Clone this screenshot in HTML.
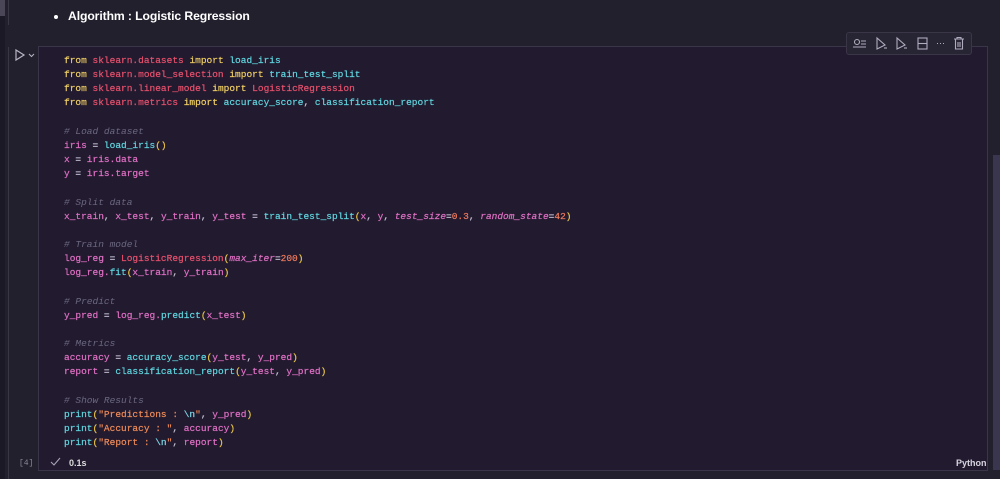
<!DOCTYPE html>
<html><head><meta charset="utf-8"><style>
html,body{margin:0;padding:0;width:1000px;height:479px;overflow:hidden;background:#23202d;font-family:"Liberation Sans",sans-serif;position:relative}
.ls{position:absolute;left:0;top:0;width:5px;height:479px;background:#1c1926}
.ls i{position:absolute;left:0;top:0;width:5px;height:16px;background:#4a4658}
.vl{position:absolute;left:8px;width:1px;background:#3a3646}
.title{position:absolute;left:54px;top:9px;color:#fff;font-weight:bold;font-size:12.2px;letter-spacing:-0.1px}
.title b{display:inline-block;width:4px;height:4px;border-radius:50%;background:#fff;margin-right:10px;vertical-align:middle}
.cell{position:absolute;left:38px;top:46px;width:950px;height:425px;background:#221b30;border:1px solid #3a3548;box-sizing:border-box}
pre{position:absolute;left:64px;top:54px;margin:0;font-family:"Liberation Mono",monospace;font-size:9.5px;line-height:14.15px;color:#e070c4;-webkit-text-stroke:0.2px}
.k{color:#f0cf63}.m{color:#e8506c}.f{color:#5fd6df}.c{color:#6c6880;font-style:italic;-webkit-text-stroke:0}.s{color:#ef8a57}.p{color:#e9c545}.n{color:#f07a5c}.a{color:#e070c4;font-style:italic}.o{color:#c8c3d6}.e{color:#7fd8e8}
.tb{position:absolute;left:846px;top:32px;width:124px;height:21px;background:#272433;border:1px solid #3a3648;border-radius:3px}
.sb{position:absolute;left:993px;top:155px;width:7px;height:315px;background:#3b3650}
.py{position:absolute;left:956px;top:458px;color:#d8d4e0;font-size:9px;font-weight:bold}
.cnt{position:absolute;left:19px;top:459px;color:#8a8698;font-size:8px;font-family:"Liberation Mono",monospace}
.tm{position:absolute;left:69px;top:458px;color:#ddd;font-size:9px;font-weight:bold}
</style></head><body>
<div class="ls"><i></i></div>
<div class="vl" style="top:0;height:25px"></div>
<div class="vl" style="top:47px;height:432px"></div>
<div class="title"><b></b>Algorithm : Logistic Regression</div>
<svg style="position:absolute;left:14px;top:48px" width="24" height="14"><path d="M2 2 L10 7 L2 12 Z" fill="none" stroke="#b8b4c6" stroke-width="1.2"/><path d="M15 6 l2.5 2.5 l2.5-2.5" fill="none" stroke="#b8b4c6" stroke-width="1"/></svg>
<div class="cell"></div>
<div class="tb"><svg width="124" height="21" fill="none" stroke="#b0acbf" stroke-width="1.1">
<circle cx="10" cy="9" r="2.5"/><path d="M14 8h5M14 11h5M6 14h13"/>
<path d="M30 5l0 11l8-4z"/><path d="M37 15h3"/>
<path d="M50 5l0 11l8-4z"/><path d="M57 15h3"/>
<rect x="71" y="5" width="9" height="11"/><path d="M71 10.5h9"/>
<path d="M90 10.5h1M93 10.5h1M96 10.5h1"/>
<path d="M107 6h10M110 6v-1.5h4V6M108.5 6v10h7V6M111 9v5M113 9v5"/></svg></div>
<pre><span class="k">from</span> <span class="m">sklearn.datasets</span> <span class="k">import</span> <span class="f">load_iris</span>
<span class="k">from</span> <span class="m">sklearn.model_selection</span> <span class="k">import</span> <span class="f">train_test_split</span>
<span class="k">from</span> <span class="m">sklearn.linear_model</span> <span class="k">import</span> <span class="m">LogisticRegression</span>
<span class="k">from</span> <span class="m">sklearn.metrics</span> <span class="k">import</span> <span class="f">accuracy_score</span><span class="o">,</span> <span class="f">classification_report</span>

<span class="c"># Load dataset</span>
iris <span class="o">=</span> <span class="f">load_iris</span><span class="p">()</span>
x <span class="o">=</span> iris.data
y <span class="o">=</span> iris.target

<span class="c"># Split data</span>
x_train<span class="o">,</span> x_test<span class="o">,</span> y_train<span class="o">,</span> y_test <span class="o">=</span> <span class="f">train_test_split</span><span class="p">(</span>x<span class="o">,</span> y<span class="o">,</span> <span class="a">test_size</span><span class="o">=</span><span class="n">0.3</span><span class="o">,</span> <span class="a">random_state</span><span class="o">=</span><span class="n">42</span><span class="p">)</span>

<span class="c"># Train model</span>
log_reg <span class="o">=</span> <span class="m">LogisticRegression</span><span class="p">(</span><span class="a">max_iter</span><span class="o">=</span><span class="n">200</span><span class="p">)</span>
log_reg.<span class="f">fit</span><span class="p">(</span>x_train<span class="o">,</span> y_train<span class="p">)</span>

<span class="c"># Predict</span>
y_pred <span class="o">=</span> log_reg.<span class="f">predict</span><span class="p">(</span>x_test<span class="p">)</span>

<span class="c"># Metrics</span>
accuracy <span class="o">=</span> <span class="f">accuracy_score</span><span class="p">(</span>y_test<span class="o">,</span> y_pred<span class="p">)</span>
report <span class="o">=</span> <span class="f">classification_report</span><span class="p">(</span>y_test<span class="o">,</span> y_pred<span class="p">)</span>

<span class="c"># Show Results</span>
<span class="f">print</span><span class="p">(</span><span class="s">"Predictions : </span><span class="e">\n</span><span class="s">"</span><span class="o">,</span> y_pred<span class="p">)</span>
<span class="f">print</span><span class="p">(</span><span class="s">"Accuracy : "</span><span class="o">,</span> accuracy<span class="p">)</span>
<span class="f">print</span><span class="p">(</span><span class="s">"Report : </span><span class="e">\n</span><span class="s">"</span><span class="o">,</span> report<span class="p">)</span></pre>
<div class="cnt">[4]</div>
<svg style="position:absolute;left:50px;top:457px" width="12" height="10"><path d="M1 5l3 3l6-7" fill="none" stroke="#a8a4b6" stroke-width="1.1"/></svg>
<div class="tm">0.1s</div>
<div class="py">Python</div>
<div class="sb"></div>
</body></html>
